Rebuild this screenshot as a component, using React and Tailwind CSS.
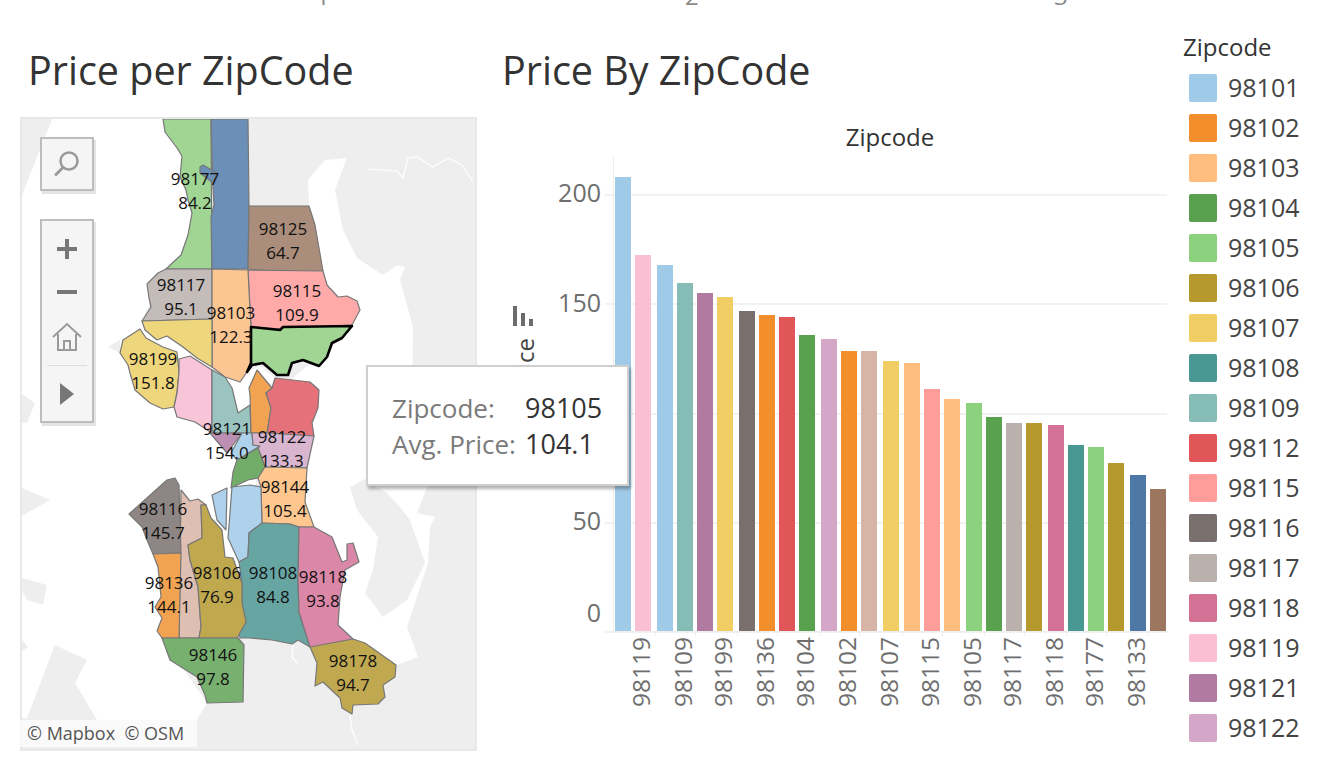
const bars = [
  [208, '#a0cbe8', 4, ''], [171, '#fabfd2', 6, '98119'], [166, '#a0cbe8', 4, ''], [158, '#86bcb6', 4, '98109'],
  [154, '#b07aa1', 4, ''], [152, '#f1ce63', 6, '98199'], [145, '#79706e', 4, ''], [144, '#f28e2b', 4, '98136'],
  [143, '#e15759', 4, ''], [134, '#59a14f', 6, '98104'], [132, '#d4a6c8', 4, ''], [127, '#f28e2b', 4, '98102'],
  [127, '#d7b5a6', 6, ''], [122, '#f1ce63', 5, '98107'], [121, '#ffbe7d', 4, ''], [109, '#ff9d9a', 4, '98115'],
  [105, '#ffbe7d', 6, ''], [103, '#8cd17d', 4, '98105'], [97, '#59a14f', 4, ''], [94, '#bab0ac', 4, '98117'],
  [94, '#b6992d', 6, ''], [93, '#d37295', 4, '98118'], [84, '#499894', 4, ''], [83, '#8cd17d', 4, '98177'],
  [76, '#b6992d', 6, ''], [71, '#4e79a7', 4, '98133'], [65, '#9d7660', 0, ''],
];
const barTops = [178, 256, 266, 284, 294, 298, 312, 316, 318, 336, 340, 352, 352, 362, 364, 390, 400, 404, 418, 424, 424, 426, 446, 448, 464, 476, 490];

const legend = [
  ['98101', '#a0cbe8'], ['98102', '#f28e2b'], ['98103', '#ffbe7d'], ['98104', '#59a14f'], ['98105', '#8cd17d'],
  ['98106', '#b6992d'], ['98107', '#f1ce63'], ['98108', '#499894'], ['98109', '#86bcb6'], ['98112', '#e15759'],
  ['98115', '#ff9d9a'], ['98116', '#79706e'], ['98117', '#bab0ac'], ['98118', '#d37295'], ['98119', '#fabfd2'],
  ['98121', '#b07aa1'], ['98122', '#d4a6c8'],
];

// land patches and water, in page pixels (the svg viewBox starts at the map's corner)
const water = [
  '53,117 163,117 165,132 177,148 182,156 180,177 188,200 192,213 188,235 181,255 166,269 142,321 212,367 247,372 260,366 275,378 262,440 245,560 238,640 162,638 207,703 197,720 97,720 75,683 87,660 55,645 27,718 20,718 20,200',
  '309,206 308,180 325,160 347,158 335,190 343,230 357,258 383,275 397,265 405,267 400,280 413,327 412,400 430,480 417,513 435,517 430,527 428,563 407,627 418,657 397,665 365,643 340,640 300,600 300,450 290,380 340,340 323,271',
];
const land = [
  '350,487 367,478 373,485 387,493 400,507 410,520 425,563 407,600 383,617 365,593 373,570 378,537 357,510',
  '20,487 50,500 20,517', '22,578 47,585 43,605 27,600 20,587', '108,347 120,340 120,353', '20,393 35,403 27,423 20,423', '20,637 28,647 20,653',
];

const zones = [
  ['163,119 211,119 212,269 166,269 181,255 188,235 192,213 188,200 186,190 180,177 182,156 177,148 165,132', '#a0d594'],
  ['211,119 248,119 249,207 248,269 212,269 211,217 214,205 213,187', '#6b8fb6'],
  ['200,167 203,165 217,173 213,183 200,173', '#6b8fb6'],
  ['249,206 309,206 315,225 323,271 280,272 248,269', '#ab8d7b'],
  ['248,270 323,271 327,285 338,297 347,296 357,301 360,310 352,325 282,329 251,327 250,310', '#ffaaa8'],
  ['166,269 212,269 212,319 142,321 151,307 149,298 147,284 158,273', '#c4bcb8'],
  ['212,269 248,270 250,310 251,327 251,363 247,372 240,382 225,377 212,367 212,319', '#fcc693'],
  ['142,321 212,319 212,367 197,358 183,347 167,336 157,340 145,330', '#eed67c'],
  ['120,353 123,340 140,329 146,338 163,347 177,352 179,372 177,393 174,407 163,409 150,403 135,390 130,373 128,365', '#eed67c'],
  ['179,359 190,356 212,370 212,433 195,422 177,417 174,407 177,393 179,372', '#f8c5d8'],
  ['212,370 225,377 232,388 238,413 250,405 251,433 212,433', '#9bc4c0'],
  ['257,370 272,388 266,393 271,408 267,433 251,433 250,395 249,388', '#f2a352'],
  ['275,378 310,382 319,390 318,408 312,423 314,436 267,433 271,408 266,393 272,388', '#e5727a'],
  ['210,433 242,433 227,453', '#bd8fb2'],
  ['242,433 252,433 253,445 260,446 237,460 231,453', '#aed2ec'],
  ['252,433 267,433 314,436 307,468 265,467 258,448 260,446 253,445', '#d9b5d0'],
  ['258,448 265,467 258,478 248,480 231,488 233,472 237,460', '#71ad68'],
  ['265,467 307,468 305,502 314,527 299,527 290,524 262,523 261,487 258,478', '#ffc78e'],
  ['212,495 227,488 226,530 217,520', '#aed2ec'],
  ['232,487 250,485 261,487 262,523 249,533 248,557 239,562 228,538', '#aed2ec'],
  ['262,523 290,524 299,527 298,580 299,612 310,647 298,640 292,644 272,640 250,638 240,638 238,632 246,622 242,603 242,583 239,562 248,557 249,533', '#67a5a3'],
  ['299,527 314,527 332,537 342,562 347,560 347,544 353,543 359,562 345,570 340,597 338,625 353,639 330,645 310,647 299,612 298,580', '#db87a7'],
  ['310,647 353,639 365,643 396,665 395,677 383,685 385,697 378,704 353,705 352,714 342,708 340,698 323,682 315,686 317,663', '#c0a850'],
  ['181,490 190,501 198,499 206,505 201,505 202,538 188,545 190,560 198,587 201,627 199,638 179,638 180,570', '#debfb1'],
  ['201,505 206,505 211,518 222,530 225,557 233,558 242,583 242,603 246,622 237,638 199,638 201,627 198,587 190,560 188,545 202,538', '#c0a84f'],
  ['129,514 167,480 175,478 179,485 181,553 153,554 147,540 142,527', '#8e8684'],
  ['153,554 181,553 179,638 162,638 157,631 162,618 155,607 161,597 158,567', '#f2a352'],
  ['162,638 238,638 244,645 243,702 207,703 205,695 197,677 170,660', '#77b06f'],
];

const mapLabels = [
  ['98177', '84.2', 195, 178], ['98125', '64.7', 283, 228], ['98117', '95.1', 181, 284], ['98115', '109.9', 297, 290],
  ['98103', '122.3', 231, 312], ['98199', '151.8', 153, 358], ['98121', '154.0', 227, 428], ['98122', '133.3', 282, 436],
  ['98144', '105.4', 285, 486], ['98116', '145.7', 163, 508], ['98136', '144.1', 169, 582], ['98106', '76.9', 217, 572],
  ['98108', '84.8', 273, 572], ['98118', '93.8', 323, 576], ['98146', '97.8', 213, 654], ['98178', '94.7', 353, 660],
];

const MapDrawing = () => (
  <svg viewBox="20 117 457 634" className="block w-[457px] h-[634px]">
    <g fill="#ffffff">
      {water.map((p, i) => <polygon key={i} points={p} />)}
    </g>
    <g fill="#eeeeee">
      {land.map((p, i) => <polygon key={i} points={p} />)}
    </g>
    <polyline points="368,169 397,171 403,178 408,158 417,157 425,162 433,167 448,158 462,165 473,182" fill="none" stroke="#ffffff" strokeWidth="1.2" />
    <polyline points="293,645 292,657 297,663" fill="none" stroke="#ffffff" strokeWidth="1.5" />
    <polyline points="350,715 352,730 358,745" fill="none" stroke="#ffffff" strokeWidth="1.2" />
    {zones.map(([p, c], i) => <polygon key={i} points={p} fill={c} stroke="#777777" strokeWidth="1.2" strokeLinejoin="round" />)}
    <polygon
      points="251,327 280,330 283,327 352,326 342,338 332,343 327,357 319,366 303,360 292,363 288,375 277,375 263,363 252,365 247,372 251,363"
      fill="#a0d594" stroke="#000000" strokeWidth="2.6" strokeLinejoin="round"
    />
    <g fill="#111111" fontSize="17" textAnchor="middle" dominantBaseline="central">
      {mapLabels.map(([zip, price, x, y]) => (
        <g key={zip}>
          <text x={x} y={y}>{zip}</text>
          <text x={x} y={y + 24}>{price}</text>
        </g>
      ))}
    </g>
  </svg>
);

const MapControls = () => (
  <div className="absolute left-[20px] top-[20px] flex flex-col gap-[28px]">
    <div className="w-[54px] h-[54px] bg-[#f5f5f5] border-2 border-[#bdbdbd] shadow-[2px_3px_0_#e4e4e4] flex items-center justify-center">
      <svg width="30" height="30" viewBox="0 0 30 30" fill="none" stroke="#9a9a9a" strokeWidth="2.5">
        <circle cx="17" cy="12" r="8.5" />
        <path d="M11 18.5 L4 25.5" strokeWidth="3" strokeLinecap="round" />
      </svg>
    </div>
    <div className="w-[54px] h-[204px] bg-[#f5f5f5] border-2 border-[#bdbdbd] shadow-[2px_3px_0_#e4e4e4] flex flex-col items-center">
      <svg className="mt-[17px]" width="22" height="22" viewBox="0 0 22 22" fill="#777777">
        <rect x="1" y="9" width="20" height="4" />
        <rect x="9" y="1" width="4" height="20" />
      </svg>
      <div className="mt-[30px] w-[20px] h-[4px] bg-[#777777]" />
      <svg className="mt-[27px]" width="32" height="32" viewBox="0 0 32 32" fill="none" stroke="#9a9a9a" strokeWidth="2">
        <path d="M2 16 L16 3 L30 16" />
        <path d="M7 13 V29 H25 V13" />
        <path d="M13 29 V20 H19 V29" />
      </svg>
      <div className="mt-[12px] w-[40px] h-px bg-[#dddddd]" />
      <svg className="mt-[16px]" width="14" height="24" viewBox="0 0 14 24" fill="#777777">
        <path d="M0 1 L14 12 L0 23 Z" />
      </svg>
    </div>
  </div>
);

const App = () => {
  return (
    <div className="relative w-[1324px] h-[764px] overflow-hidden bg-white font-['Open_Sans',sans-serif]">
      {/* cut off row of the sheet above */}
      <div className="h-[8px] overflow-hidden flex items-end pl-[316px] text-[24px] leading-none text-[#8a8a8a]">
        <span className="w-[369px] shrink-0">1</span>
        <span className="w-[369px] shrink-0">2</span>
        <span className="shrink-0">3</span>
      </div>

      <div className="flex">
        {/* map */}
        <div className="w-[502px] shrink-0 pl-[20px]">
          <div className="h-[109px] flex items-center pl-[8px] pt-[16px] text-[39.5px] font-medium text-[#333333]">Price per ZipCode</div>
          <div className="relative w-[457px] h-[634px] bg-[#eeeeee] outline-2 -outline-offset-2 outline-[#e8e8e8]">
            <MapDrawing />
            <MapControls />
            <div className="absolute left-0 top-[603px] w-[177px] h-[27px] bg-white/70 pl-[7px] flex items-center text-[18px] text-[#555555] whitespace-pre">© Mapbox  © OSM</div>
          </div>
        </div>

        {/* bars */}
        <div className="w-[681px] shrink-0">
          <div className="h-[109px] flex items-center pt-[16px] text-[39.5px] font-medium text-[#333333]">Price By ZipCode</div>
          <div className="h-[39px] flex items-center justify-center pl-[111px] pr-[16px] text-[24px] font-medium text-[#333333]">Zipcode</div>
          <div className="grid">
            <div className="col-start-1 row-start-1 self-start h-[476px] pt-[39px]">
              <div className="h-[437px] flex flex-col justify-between">
                {['200', '150', '100', '50', '0'].map(v => (
                  <div key={v} className="h-0 flex items-center">
                    <span className={`w-[99px] shrink-0 text-right text-[25px] text-[#6e6e6e] ${v === '0' ? '-translate-y-[19px]' : '-translate-y-[2px]'}`}>{v}</span>
                    <div className="ml-[4px] w-[562px] h-[2px] bg-[#f2f2f2]" />
                  </div>
                ))}
              </div>
            </div>
            <div className="col-start-1 row-start-1 self-start pl-[11px] pt-[150px] flex flex-col items-start">
              <svg width="20" height="20" viewBox="0 0 20 20" fill="#6b6b6b">
                <rect x="0" y="0" width="4" height="20" />
                <rect x="8" y="7" width="4" height="13" />
                <rect x="16" y="13" width="4" height="7" />
              </svg>
              <span className="mt-[12px] [writing-mode:vertical-rl] rotate-180 text-[24px] leading-none text-[#444444]">Avg. Price</span>
            </div>
            <div className="col-start-1 row-start-1 ml-[111px] self-start">
              <div className="flex pl-[1px] h-[476px] w-[555px] items-end border-l border-b border-[#eeeeee]">
                {bars.map(([v, c, gap], i) => (
                  <div
                    key={i}
                    className="w-[16px] shrink-0"
                    style={{ height: 632 - barTops[i], background: c, marginRight: gap }}
                  />
                ))}
              </div>
              <div className="flex pl-[2px]">
                {bars.map(([v, c, gap, zip], i) => (
                  <div key={i} className="w-[16px] shrink-0 flex flex-col items-center" style={{ marginRight: gap }}>
                    <div className={`self-start -ml-[2px] w-px h-[4px] ${i > 0 && i % 2 === 0 ? 'bg-[#eeeeee]' : ''}`} />
                    {zip && (
                      <span className="mt-[1px] [writing-mode:vertical-rl] rotate-180 text-[24.5px] leading-none text-[#6e6e6e] -translate-x-[2px]">{zip}</span>
                    )}
                  </div>
                ))}
              </div>
            </div>
          </div>
        </div>

        {/* legend */}
        <div className="flex-1 pt-[23px]">
          <div className="h-[32px] flex items-center text-[24px] font-medium text-[#333333]">Zipcode</div>
          <div className="mt-[11px] pl-[6px] flex flex-col gap-[12px]">
            {legend.map(([zip, c]) => (
              <div key={zip} className="h-[28px] flex items-center">
                <div className="w-[28px] h-[28px] rounded-[2px]" style={{ background: c }} />
                <span className="ml-[11px] -mt-[2px] text-[25px] leading-none text-[#444444]">{zip}</span>
              </div>
            ))}
          </div>
        </div>
      </div>

      {/* hover card */}
      <div className="absolute left-[366px] top-[365px] w-[263px] h-[121px] bg-white border-2 border-[#cfcfcf] shadow-[2px_3px_3px_rgba(0,0,0,0.3)] pl-[24px] pt-[23px] leading-[36px]">
        <div className="flex">
          <span className="w-[133px] text-[26px] text-[#7a7a7a]">Zipcode:</span>
          <span className="text-[27px] text-[#333333] font-medium">98105</span>
        </div>
        <div className="flex">
          <span className="w-[133px] text-[26px] text-[#7a7a7a]">Avg. Price:</span>
          <span className="text-[27px] text-[#333333] font-medium">104.1</span>
        </div>
      </div>
    </div>
  );
};

export default App;
